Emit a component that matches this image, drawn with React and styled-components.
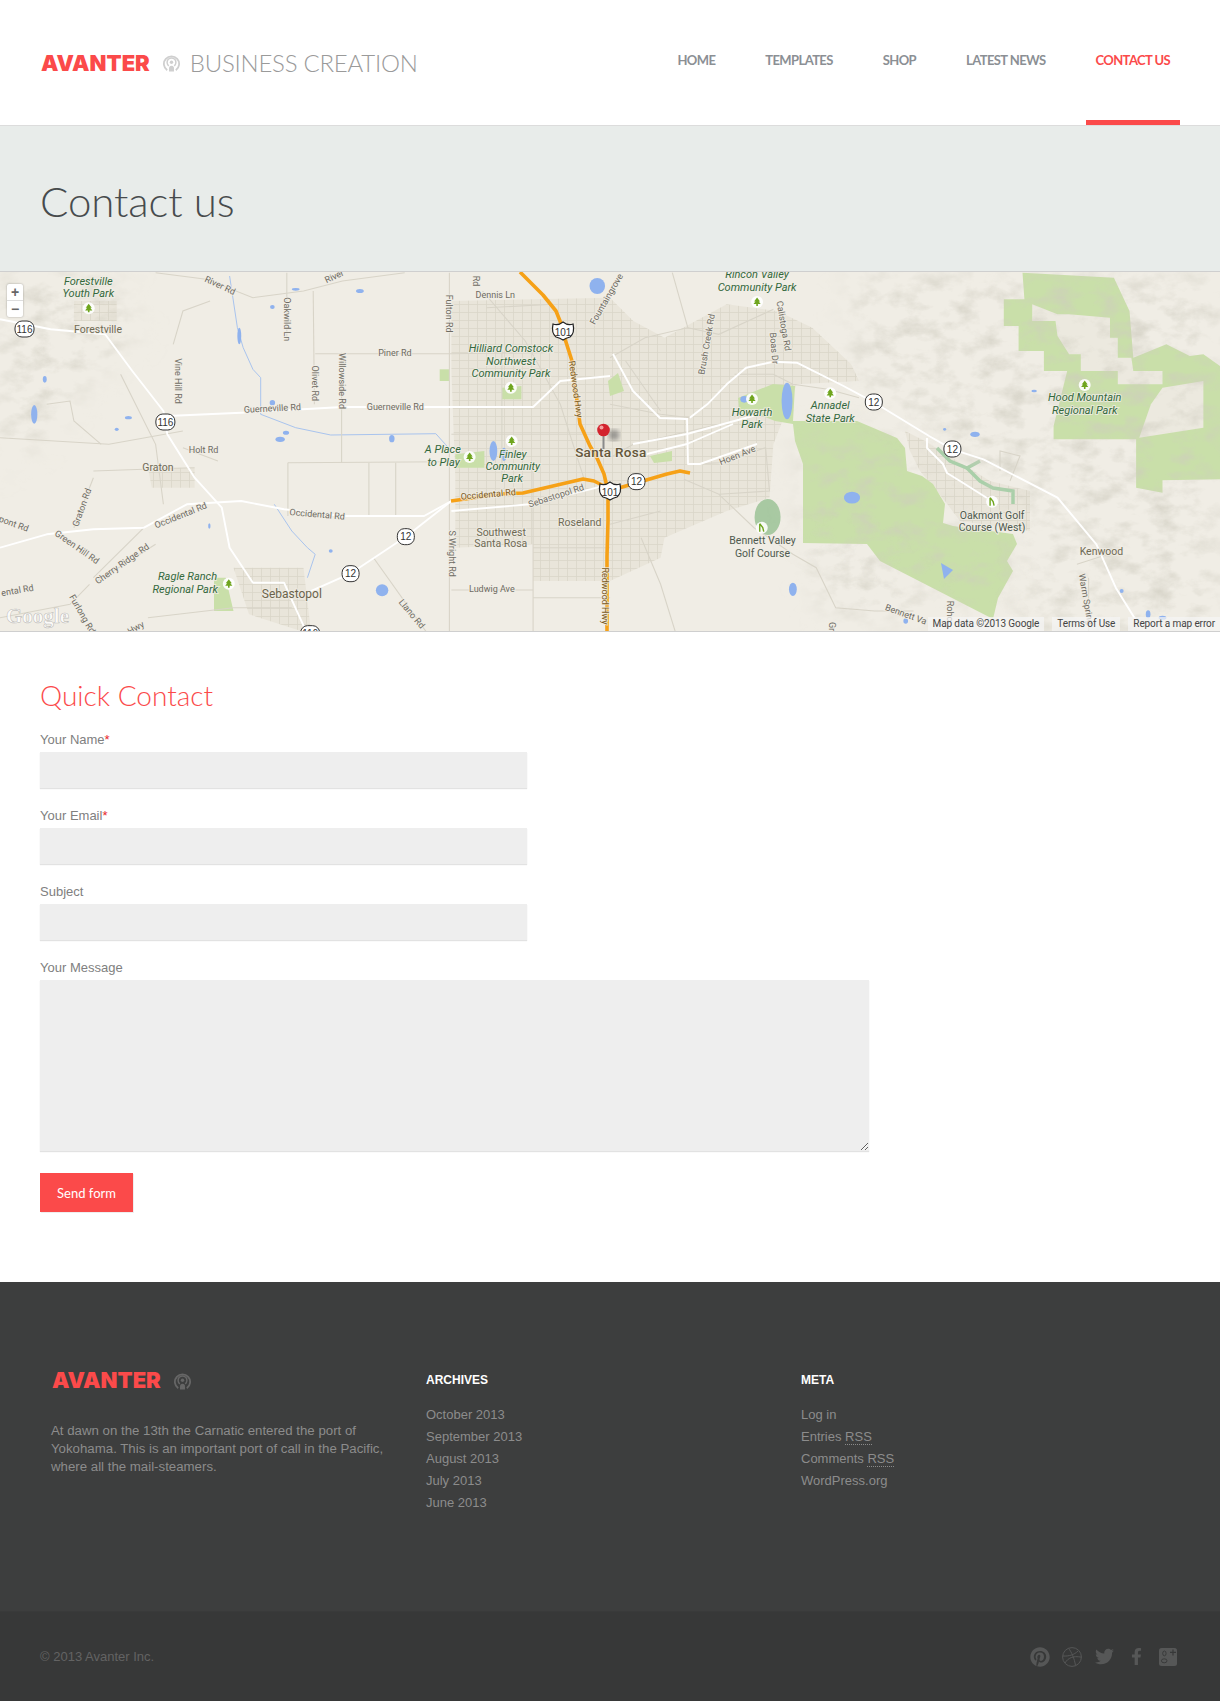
import React from "react";
import styled, { createGlobalStyle } from "styled-components";
import { FaPinterest, FaTwitter, FaFacebookF } from "react-icons/fa";

const GlobalStyle = createGlobalStyle`
  html, body { margin: 0; padding: 0; background: #fff; }
  body { font-family: "Liberation Sans", Arial, sans-serif; color: #7b7b7b; }
  * { box-sizing: border-box; }
`;

const RED = "#fb4a4a";

const Header = styled.header`
  display: flex;
  justify-content: space-between;
  height: 126px;
  padding: 0 40px 0 41px;
  border-bottom: 1px solid #dcdcdc;
`;

const Brand = styled.div`
  display: flex;
  align-items: center;
  gap: 13px;
`;

const LogoText = styled.span`
  font-family: Inter, Lato, sans-serif;
  font-weight: 900;
  font-size: 22px;
  line-height: 24px;
  letter-spacing: 0;
  color: ${RED};
`;

const Tagline = styled.span`
  margin-left: -3px;
  font-family: Lato, sans-serif;
  font-weight: 300;
  font-size: 24px;
  letter-spacing: -0.25px;
  color: #9a9a9a;
`;

const Nav = styled.nav`
  display: flex;
  gap: 30px;
`;

const NavItem = styled.a`
  padding: 52px 10px 0;
  height: 125px;
  font-family: Lato, sans-serif;
  font-weight: 700;
  font-size: 13px;
  line-height: 16px;
  letter-spacing: -0.6px;
  color: ${(p) => (p.$active ? RED : "#8b8f94")};
  border-bottom: 5px solid ${(p) => (p.$active ? RED : "transparent")};
`;

const TitleBand = styled.div`
  display: flex;
  align-items: center;
  height: 145px;
  padding: 4px 40px 0;
  background: #e8ecea;
`;

const PageTitle = styled.h1`
  margin: 0;
  font-family: Lato, sans-serif;
  font-weight: 300;
  font-size: 42px;
  letter-spacing: -0.1px;
  color: #474b4d;
`;

const MapFrame = styled.div`
  position: relative;
  height: 361px;
  overflow: hidden;
  border-top: 1px solid #cfcfcf;
  border-bottom: 1px solid #cfcfcf;
  background: #f0ede5;
`;

const MapCanvas = styled.svg`
  display: block;
`;

const LABEL_STYLES = {
  park: "font-size: 11px; font-style: italic; fill: #33683c;",
  road: "font-size: 9px; fill: #6e6b62;",
  hwy: "font-size: 9px; fill: #7c5a1c;",
  town: "font-size: 10.5px; fill: #6f6a55;",
  place: "font-size: 10.5px; fill: #4f5a4f;",
  city: "font-size: 13.5px; font-weight: 500; letter-spacing: 0.3px; fill: #64563a;",
  mid: "font-size: 12px; fill: #6b634c;",
};

const MapLabel = styled.text`
  font-family: Roboto, "Liberation Sans", sans-serif;
  text-anchor: middle;
  dominant-baseline: middle;
  paint-order: stroke;
  stroke: rgba(240, 237, 229, 0.8);
  stroke-width: 2px;
  ${(p) => LABEL_STYLES[p.$kind]}
`;

const ShieldText = styled.text`
  font-family: "Liberation Sans", sans-serif;
  font-size: 10px;
  text-anchor: middle;
  dominant-baseline: central;
  fill: #333;
`;

const GoogleMark = styled.text`
  font-family: "Liberation Serif", serif;
  font-weight: 700;
  font-size: 21px;
  fill: rgba(255, 255, 255, 0.75);
  stroke: rgba(120, 120, 120, 0.45);
  stroke-width: 0.6px;
`;

const ZoomControl = styled.div`
  position: absolute;
  top: 12px;
  left: 7px;
  display: flex;
  flex-direction: column;
  width: 16px;
  height: 33px;
  background: #fff;
  border-radius: 2px;
  box-shadow: 0 0 2px rgba(0, 0, 0, 0.35);
`;

const ZoomButton = styled.span`
  flex: 1;
  font: 700 14px/16px "Liberation Sans", sans-serif;
  text-align: center;
  color: #666;
  & + & { border-top: 1px solid #ddd; }
`;

const Attribution = styled.div`
  position: absolute;
  right: 0;
  bottom: 0;
  display: flex;
  gap: 8px;
`;

const AttributionItem = styled.span`
  padding: 0 5px;
  background: rgba(245, 245, 245, 0.7);
  font: 10px/14px Roboto, sans-serif;
  letter-spacing: -0.1px;
  color: #444;
`;

const Content = styled.main`
  padding: 45px 40px 70px;
`;

const SectionTitle = styled.h2`
  margin: 0 0 17px;
  font-family: Lato, sans-serif;
  font-weight: 300;
  font-size: 28px;
  line-height: 36px;
  color: ${RED};
`;

const Form = styled.form`
  display: flex;
  flex-direction: column;
  align-items: flex-start;
  gap: 18px;
`;

const Field = styled.div`
  display: flex;
  flex-direction: column;
`;

const Label = styled.label`
  height: 18px;
  margin-bottom: 4px;
  padding-top: 1px;
  font-size: 13px;
  line-height: 18px;
  color: #808080;
`;

const Required = styled.span`
  color: #e8262c;
`;

const Input = styled.input`
  display: block;
  width: 487px;
  height: 36px;
  border: 0;
  background: #eee;
  box-shadow: 0 1px 1px #e2e2e2;
  outline: none;
`;

const TextArea = styled.textarea`
  display: block;
  width: 829px;
  height: 171px;
  border: 0;
  background: #eee;
  box-shadow: 0 1px 1px #e2e2e2;
  outline: none;
`;

const SendButton = styled.button`
  width: 93px;
  height: 39px;
  margin-top: 4px;
  border: 0;
  background: ${RED};
  box-shadow: 1px 1px 0 #eee;
  font-family: Lato, sans-serif;
  font-size: 13px;
  color: #fff;
`;

const FooterMain = styled.footer`
  display: grid;
  grid-template-columns: repeat(3, 345px);
  gap: 30px;
  height: 329px;
  padding: 86px 0 0 51px;
  background: #3d3e3e;
`;

const FooterBrand = styled.div`
  display: flex;
  align-items: center;
  gap: 13px;
  height: 24px;
  margin: 0 0 30px 1px;
`;

const FooterText = styled.p`
  margin: 0;
  font-size: 13.25px;
  line-height: 18px;
  color: #8c8c8c;
`;

const FooterTitle = styled.h3`
  margin: 0 0 12px;
  font-size: 12px;
  line-height: 24px;
  font-weight: 700;
  color: #fff;
`;

const FooterList = styled.ul`
  margin: 0;
  padding: 0;
  list-style: none;
`;

const FooterLink = styled.li`
  font-size: 13px;
  line-height: 22px;
  color: #8c8c8c;
`;

const Abbr = styled.abbr`
  border-bottom: 1px dotted #8a8a8a;
`;

const FooterBottom = styled.div`
  display: flex;
  justify-content: space-between;
  align-items: center;
  height: 90px;
  padding: 0 36px 0 40px;
  background: #373838;
  border-top: 1px solid #393a3a;
`;

const Copyright = styled.span`
  font-size: 13px;
  color: #636363;
`;

const SocialRow = styled.div`
  display: flex;
`;

const SocialSlot = styled.a`
  display: flex;
  justify-content: center;
  align-items: center;
  width: 32px;
  height: 22px;
  color: #565757;
  font-size: ${(p) => p.$size}px;
`;

const BroadcastIcon = ({ color }) => (
  <svg width="17" height="19" viewBox="0 0 17 19" fill="none" stroke={color}>
    <path d="M4.2 17.2a7.6 7.6 0 1 1 8.6 0" strokeWidth="1.8" />
    <path d="M5.8 12.8a4.4 4.4 0 1 1 5.4 0" strokeWidth="1.5" />
    <circle cx="8.5" cy="9.2" r="1.7" fill={color} stroke="none" />
    <path d="M6 18.5v-3.2a2.5 2.5 0 0 1 5 0v3.2z" fill={color} stroke="none" />
  </svg>
);

const DribbbleIcon = () => (
  <svg width="20" height="20" viewBox="0 0 20 20" fill="none" stroke="currentColor" strokeWidth="1">
    <circle cx="10" cy="10" r="9.4" />
    <path d="M6.5 1.3c3 3.6 6 10.5 7 17.2M1 9c6 .3 11-1 15-5M3 16c3-5 8-7.5 16.4-5.8" />
  </svg>
);

const GooglePlusIcon = () => (
  <svg width="18" height="18" viewBox="0 0 18 18">
    <rect width="18" height="18" rx="2.5" fill="currentColor" />
    <g fill="none" stroke="#373838">
      <ellipse cx="5.4" cy="5.4" rx="1.7" ry="2.4" strokeWidth="0.9" />
      <ellipse cx="5.2" cy="12.8" rx="2.8" ry="2" strokeWidth="0.9" />
      <path d="M14 1.4v6M11 4.4h6" strokeWidth="1.2" />
    </g>
  </svg>
);

// map data is read off the reference: L and R are its two halves, F is full-page pixels
const L = ([x, y]) => [x / 2.57, y / 3 - 1];
const R = ([x, y]) => [610 + x / 2.57, y / 3 - 1];
const F = ([x, y]) => [x, y - 271];
const toPoints = (frame, pts) => pts.map((p) => frame(p).map((n) => n.toFixed(1)).join(",")).join(" ");

const HILLS = [
  [R, [[620, 5], [1568, 5], [1568, 1090], [1050, 1090], [1100, 760], [820, 480], [620, 330]]],
  [L, [[0, 5], [300, 5], [360, 200], [300, 240], [100, 500], [0, 600]]],
  [R, [[495, 830], [660, 830], [860, 1040], [560, 1040]]],
  [F, [[803, 430], [900, 440], [950, 530], [1015, 540], [995, 615], [870, 550], [803, 540]]],
];

const URBAN = [
  [L, [[1160, 90], [1568, 80], [1568, 930], [1370, 930], [1370, 820], [1170, 830], [1170, 620], [1160, 300]]],
  [R, [[0, 80], [60, 150], [140, 200], [300, 100], [430, 120], [520, 170], [620, 280], [640, 330], [480, 340], [420, 520], [410, 680], [300, 720], [140, 800], [130, 860], [0, 930]]],
  [L, [[600, 890], [780, 890], [800, 1090], [640, 1030]]],
  [L, [[380, 590], [500, 590], [500, 650], [390, 650]]],
  [L, [[190, 90], [300, 90], [300, 150], [190, 150]]],
  [F, [[905, 430], [925, 440], [990, 480], [1030, 490], [1030, 530], [960, 520], [945, 500], [920, 470], [910, 450]]],
];

const PARKS = [
  [F, [[738, 397], [773, 383], [795, 385], [793, 420], [820, 420], [857, 420], [897, 437], [905, 447], [907, 470], [922, 475], [933, 483], [945, 503], [943, 522], [953, 525], [1013, 533], [1017, 543], [1007, 560], [1013, 570], [998, 597], [993, 618], [880, 560], [867, 543], [803, 542], [803, 463], [795, 440], [793, 423], [775, 420], [755, 412], [740, 415]]],
  [R, [[1060, 5], [1295, 20], [1335, 120], [1345, 260], [1430, 220], [1490, 255], [1525, 250], [1568, 285], [1568, 625], [1420, 628], [1420, 665], [1352, 650], [1352, 505], [1140, 505], [1140, 465], [1175, 300], [1115, 300], [1115, 240], [1050, 240], [1050, 165], [1012, 165], [1012, 85], [1065, 85]]],
  [L, [[550, 920], [580, 920], [600, 1020], [550, 1020]]],
  [L, [[1130, 295], [1155, 295], [1155, 330], [1130, 330]]],
  [L, [[1170, 550], [1245, 540], [1245, 590], [1170, 590]]],
  [L, [[1290, 350], [1340, 345], [1340, 385], [1290, 385]]],
  [F, [[608, 380], [618, 372], [624, 390], [610, 395]]],
  [F, [[650, 455], [672, 450], [672, 460], [654, 462]]],
];

const PARK_HOLES = [
  [R, [[1085, 100], [1150, 130], [1180, 130], [1285, 140], [1285, 200], [1305, 200], [1305, 260], [1340, 260], [1345, 300], [1420, 300], [1420, 340], [1305, 340], [1305, 300], [1210, 300], [1210, 250], [1180, 250], [1150, 195], [1145, 150], [1085, 150]]],
  [R, [[1420, 350], [1525, 330], [1525, 470], [1360, 500], [1390, 400]]],
];

const COURSE_FAIRWAYS = [
  [F, [[937, 447], [950, 460], [967, 467], [980, 460]]],
  [F, [[967, 467], [980, 480], [993, 487], [1013, 490], [1013, 503]]],
];

const MINOR_ROADS = [
  [L, [[810, 248], [1160, 248], [1400, 245]]],
  [L, [[1155, 5], [1155, 1090]]],
  [L, [[878, 245], [878, 575]]],
  [L, [[805, 60], [808, 400]]],
  [L, [[737, 5], [737, 210]]],
  [L, [[445, 220], [470, 120], [540, 90]]],
  [L, [[400, 5], [530, 25], [650, 80], [780, 60], [880, 30], [1040, 5]]],
  [L, [[740, 575], [1150, 572]]],
  [L, [[740, 575], [740, 735]]],
  [L, [[1017, 575], [1017, 735]]],
  [L, [[948, 575], [948, 735]]],
  [L, [[240, 600], [370, 595], [500, 590]]],
  [L, [[190, 770], [240, 620]]],
  [L, [[470, 530], [560, 570]]],
  [L, [[240, 920], [370, 770]]],
  [L, [[400, 820], [250, 930]]],
  [L, [[380, 1040], [600, 1010], [750, 1010]]],
  [L, [[0, 500], [280, 520], [470, 480]]],
  [L, [[310, 310], [400, 520], [420, 700]]],
  [L, [[120, 400], [180, 390], [190, 450], [260, 520]]],
  [L, [[0, 1040], [180, 1000], [230, 940]]],
  [L, [[960, 860], [1100, 1090]]],
  [L, [[1160, 957], [1370, 957]]],
  [L, [[1370, 830], [1568, 830]]],
  [L, [[1370, 980], [1568, 980]]],
  [L, [[1370, 600], [1370, 1090]]],
  [L, [[1160, 490], [1568, 490]]],
  [L, [[1250, 110], [1420, 100]]],
  [L, [[1290, 240], [1290, 620]]],
  [L, [[1240, 60], [1350, 210], [1440, 400], [1500, 620]]],
  [R, [[160, 5], [200, 170], [90, 200], [0, 260]]],
  [R, [[200, 170], [280, 190], [420, 115]]],
  [R, [[320, 310], [420, 310], [470, 340], [560, 355], [640, 380]]],
  [R, [[205, 580], [280, 575], [400, 530], [410, 660], [280, 670], [190, 625]]],
  [R, [[280, 670], [370, 770], [470, 850], [530, 890], [580, 1010], [680, 1020], [780, 1020]]],
  [R, [[80, 800], [130, 940], [170, 1090]]],
  [R, [[1200, 880], [1280, 850]]],
  [R, [[205, 440], [130, 430], [0, 400]]],
  [R, [[280, 460], [60, 520], [0, 560]]],
  [R, [[40, 270], [130, 420]]],
  [R, [[130, 720], [0, 760]]],
  [R, [[1230, 920], [1230, 1090]]],
  [F, [[1000, 470], [1000, 450], [1020, 455], [1010, 480]]],
];

const MAIN_ROADS = [
  [L, [[0, 145], [130, 175], [270, 190], [340, 300], [420, 420], [430, 490], [500, 620], [570, 710], [590, 830], [650, 935], [730, 935], [790, 1090]]],
  [L, [[430, 435], [620, 425], [880, 408], [1160, 408], [1370, 408], [1440, 330], [1568, 315]]],
  [L, [[0, 830], [120, 790], [240, 775], [370, 770], [480, 700], [620, 690], [730, 715], [880, 735], [1090, 735], [1160, 690]]],
  [L, [[780, 970], [900, 908], [1043, 797], [1160, 690]]],
  [L, [[1160, 720], [1360, 700], [1568, 640]]],
  [R, [[205, 440], [250, 400], [300, 340], [350, 290], [420, 272], [480, 275], [600, 345], [680, 395], [820, 495], [880, 535], [960, 565], [1150, 680], [1250, 820], [1300, 950], [1350, 1045]]],
  [F, [[613, 353], [633, 390], [660, 417], [687, 418]]],
  [F, [[687, 417], [688, 463], [700, 463], [757, 443]]],
  [F, [[633, 443], [687, 433], [760, 413]]],
  [F, [[647, 453], [687, 443], [733, 423]]],
  [F, [[927, 437], [927, 447], [943, 463], [947, 472], [960, 480], [987, 497]]],
];

const FREEWAYS = [
  [F, [[520, 271], [543, 294], [556, 310], [562, 325], [565, 338], [572, 360], [577, 400], [580, 423], [590, 445], [597, 457], [604, 473], [608, 490], [608, 520], [607, 555], [607, 632]]],
  [F, [[451, 500], [500, 493], [523, 492], [583, 478], [594, 480], [604, 485]]],
  [F, [[612, 489], [667, 473], [680, 470], [690, 472]]],
];

const WATER = [
  [L, 88, 430, 8, 28], [L, 115, 325, 5, 10], [L, 615, 195, 5, 25], [L, 700, 108, 6, 6], [L, 925, 60, 10, 6],
  [L, 760, 55, 10, 4], [L, 720, 505, 12, 8], [L, 735, 485, 8, 6], [L, 1007, 503, 7, 11], [L, 1268, 540, 10, 30],
  [L, 1295, 550, 8, 20], [L, 982, 958, 16, 18], [L, 538, 765, 3, 8], [L, 1535, 45, 20, 24], [L, 850, 840, 5, 5],
  [L, 700, 395, 7, 8], [L, 330, 440, 9, 5], [L, 300, 475, 5, 5], [R, 455, 390, 14, 55], [R, 622, 678, 20, 16],
  [R, 938, 490, 12, 8], [R, 345, 385, 10, 10], [R, 470, 955, 10, 20], [R, 1383, 1030, 6, 12],
  [R, 1420, 1040, 10, 6], [R, 1090, 360, 7, 4], [R, 860, 475, 4, 4], [R, 1315, 960, 5, 6], [R, 760, 1050, 6, 8],
];

const RIVERS = [
  [L, [[590, 15], [610, 170], [625, 230], [650, 295], [670, 320], [670, 430], [760, 470], [850, 492], [1120, 488], [1160, 540]]],
  [L, [[705, 700], [750, 780], [790, 830], [810, 850], [790, 920]]],
];

const LABELS = [
  [L, "park", "Forestville", 227, 33], [L, "park", "Youth Park", 227, 69],
  [L, "park", "Hilliard Comstock", 1313, 234], [L, "park", "Northwest", 1313, 272], [L, "park", "Community Park", 1313, 309],
  [L, "park", "Finley", 1318, 552], [L, "park", "Community", 1318, 589], [L, "park", "Park", 1316, 625],
  [L, "park", "A Place", 1138, 537], [L, "park", "to Play", 1140, 576],
  [L, "park", "Ragle Ranch", 482, 918], [L, "park", "Regional Park", 476, 957],
  [R, "park", "Rincon Valley", 378, 13], [R, "park", "Community Park", 378, 51],
  [R, "park", "Howarth", 365, 426], [R, "park", "Park", 365, 462],
  [R, "park", "Annadel", 566, 405], [R, "park", "State Park", 566, 444],
  [R, "park", "Hood Mountain", 1220, 381], [R, "park", "Regional Park", 1220, 420],
  [R, "place", "Bennett Valley", 392, 810], [R, "place", "Golf Course", 392, 849],
  [R, "place", "Oakmont Golf", 982, 735], [R, "place", "Course (West)", 982, 771],
  [L, "town", "Forestville", 252, 177], [L, "town", "Graton", 406, 591], [L, "town", "Roseland", 1490, 756],
  [L, "town", "Southwest", 1288, 787], [L, "town", "Santa Rosa", 1287, 819], [R, "town", "Kenwood", 1263, 843],
  [L, "mid", "Sebastopol", 750, 972], [L, "city", "Santa Rosa", 1570, 546],
  [L, "road", "Dennis Ln", 1273, 73], [L, "road", "Piner Rd", 1015, 248],
  [L, "road", "Guerneville Rd", 700, 414, -3], [L, "road", "Guerneville Rd", 1016, 410],
  [L, "road", "Holt Rd", 523, 538], [L, "road", "Occidental Rd", 465, 735, -22], [L, "road", "Occidental Rd", 815, 732, 5],
  [L, "road", "Sebastopol Rd", 1430, 676, -18], [L, "hwy", "Occidental Rd", 1255, 672, -5], [L, "road", "Ludwig Ave", 1264, 957],
  [L, "road", "Oakwild Ln", 735, 145, 90], [L, "road", "Olivet Rd", 807, 337, 90], [L, "road", "Willowside Rd", 877, 330, 90],
  [L, "road", "Vine Hill Rd", 457, 330, 90], [L, "road", "Fulton Rd", 1153, 128, 90], [L, "road", "Rd", 1222, 30, 90],
  [L, "road", "S Wright Rd", 1160, 848, 90], [L, "hwy", "Redwood Hwy", 1478, 355, 82], [L, "hwy", "Redwood Hwy", 1553, 975, 90],
  [L, "road", "Graton Rd", 212, 710, -70], [L, "road", "Green Hill Rd", 197, 830, 35], [L, "road", "Cherry Ridge Rd", 315, 880, -35],
  [L, "road", "River Rd", 565, 45, 25], [L, "road", "River", 860, 18, -25], [L, "road", "Furlong Rd", 210, 1030, 60],
  [L, "road", "Llano Rd", 1057, 1030, 50], [L, "road", "ental Rd", 45, 960, -10], [L, "road", "pont Rd", 35, 760, 20],
  [L, "road", "Hwy", 350, 1072, -30], [L, "road", "Fountaingrove", 1560, 85, -60],
  [R, "road", "Brush Creek Rd", 250, 220, -80], [R, "road", "Calistoga Rd", 445, 165, 80], [R, "road", "Boas Dr", 420, 232, 85],
  [R, "road", "Hoen Ave", 328, 555, -22], [R, "road", "Bennett Va", 760, 1032, 20], [R, "road", "Warm Spring", 1222, 985, 80],
  [R, "road", "Rohc", 873, 1020, 90], [R, "road", "Gri", 568, 1070, 90],
];

const ROUND_SHIELDS = [
  [L, "116", 63, 174, 8.5], [L, "116", 425, 453, 8.5], [L, "116", 797, 1088, 8.5],
  [L, "12", 1043, 797, 7.5], [L, "12", 901, 908, 7.5],
  [R, "12", 68, 632, 7.5], [R, "12", 678, 393, 7.5], [R, "12", 880, 534, 7.5],
];

const US_SHIELDS = [[L, 1447, 180], [R, 0, 660]];

const TREES = [
  [L, 228, 112], [L, 1313, 350], [L, 1315, 510], [L, 1207, 558], [L, 588, 938],
  [R, 378, 93], [R, 365, 384], [R, 566, 367], [R, 1220, 342],
];

const GOLF = [[R, 390, 770], [R, 982, 692]];

const MapDrawing = () => (
  <MapCanvas width="1220" height="359" viewBox="0 0 1220 359">
    <defs>
      <filter id="hills" filterUnits="userSpaceOnUse" x="0" y="0" width="1220" height="359">
        <feGaussianBlur in="SourceAlpha" stdDeviation="16" result="soft" />
        <feTurbulence type="fractalNoise" baseFrequency="0.04 0.06" numOctaves="5" seed="11" />
        <feColorMatrix values="0 0 0 0 0.62  0 0 0 0 0.6  0 0 0 0 0.52  1.5 0 0 0 -0.66" />
        <feComposite in2="soft" operator="in" />
      </filter>
      <filter id="pinShadow">
        <feGaussianBlur stdDeviation="2.4" />
      </filter>
      <pattern id="streets" width="9" height="8" patternUnits="userSpaceOnUse">
        <rect width="9" height="8" fill="#e9e5da" />
        <path d="M0 .5H9M.5 0V8" stroke="#d9d5c9" strokeWidth="0.8" />
      </pattern>
    </defs>
    <rect width="1220" height="359" fill="#f0ede5" />
    {URBAN.map(([f, pts], i) => (
      <polygon key={i} points={toPoints(f, pts)} fill="url(#streets)" />
    ))}
    {PARKS.map(([f, pts], i) => (
      <polygon key={i} points={toPoints(f, pts)} fill="#c9dfa9" />
    ))}
    {PARK_HOLES.map(([f, pts], i) => (
      <polygon key={i} points={toPoints(f, pts)} fill="#ece9df" />
    ))}
    <ellipse cx={610 + 405 / 2.57} cy={245} rx="13" ry="18" fill="#a8c9a2" />
    {COURSE_FAIRWAYS.map(([f, pts], i) => (
      <polyline key={i} points={toPoints(f, pts)} fill="none" stroke="#a9cfa9" strokeWidth="3.5" />
    ))}
    {HILLS.map(([f, pts], i) => (
      <polygon key={i} points={toPoints(f, pts)} filter="url(#hills)" />
    ))}
    {RIVERS.map(([f, pts], i) => (
      <polyline key={i} points={toPoints(f, pts)} fill="none" stroke="#a9c4ee" strokeWidth="1" />
    ))}
    {WATER.map(([f, x, y, rx, ry], i) => {
      const [cx, cy] = f([x, y]);
      return <ellipse key={i} cx={cx} cy={cy} rx={rx / 2.57} ry={ry / 3} fill="#8fb2ee" />;
    })}
    <ellipse cx="852" cy="226" rx="8" ry="5.5" fill="#8fb2ee" />
    <polygon points="941,291 953,298 944,307" fill="#8fb2ee" />
    {MINOR_ROADS.map(([f, pts], i) => (
      <polyline key={i} points={toPoints(f, pts)} fill="none" stroke="#d8d4c8" strokeWidth="1.1" />
    ))}
    {MAIN_ROADS.map(([f, pts], i) => (
      <polyline key={i} points={toPoints(f, pts)} fill="none" stroke="#fff" strokeWidth="1.9" strokeLinejoin="round" />
    ))}
    {FREEWAYS.map(([f, pts], i) => (
      <polyline key={i} points={toPoints(f, pts)} fill="none" stroke="#f6a117" strokeWidth="3.6" strokeLinejoin="round" />
    ))}
    {LABELS.map(([f, kind, text, x, y, rot], i) => {
      const [px, py] = f([x, y]);
      return (
        <MapLabel key={i} $kind={kind} x={px} y={py} transform={rot ? `rotate(${rot} ${px} ${py})` : undefined}>
          {text}
        </MapLabel>
      );
    })}
    {ROUND_SHIELDS.map(([f, text, x, y, r], i) => {
      const [px, py] = f([x, y]);
      return (
        <g key={i}>
          <rect x={px - r - 1} y={py - 8} width={2 * r + 2} height="16" rx="7" fill="#fff" stroke="#333" strokeWidth="1" />
          <ShieldText x={px} y={py}>{text}</ShieldText>
        </g>
      );
    })}
    {US_SHIELDS.map(([f, x, y], i) => {
      const [px, py] = f([x, y]);
      return (
        <g key={i}>
          <path
            d={`M${px - 10} ${py - 7}q5 2 10 -2q5 4 10 2q2 9 -3 13q-4 1 -7 3q-3 -2 -7 -3q-5 -4 -3 -13z`}
            fill="#fff"
            stroke="#222"
            strokeWidth="1.2"
          />
          <ShieldText x={px} y={py + 1}>101</ShieldText>
        </g>
      );
    })}
    {TREES.map(([f, x, y], i) => {
      const [px, py] = f([x, y]);
      return (
        <g key={i}>
          <circle cx={px} cy={py} r="6" fill="#fff" opacity="0.9" />
          <path d={`M${px} ${py - 4.5}l3 4h-1.4l2 2.6h-7.2l2-2.6h-1.4zM${px - 0.8} ${py + 2}h1.6v2h-1.6z`} fill="#6fa51d" />
        </g>
      );
    })}
    {GOLF.map(([f, x, y], i) => {
      const [px, py] = f([x, y]);
      return (
        <g key={i}>
          <circle cx={px} cy={py} r="6" fill="#fff" opacity="0.9" />
          <path d={`M${px - 2} ${py - 4}v8M${px - 2} ${py - 4}l3 4l1 4`} stroke="#6fa51d" strokeWidth="1.4" fill="none" />
        </g>
      );
    })}
    <circle cx="614" cy="163" r="5.5" fill="#555" opacity="0.55" filter="url(#pinShadow)" />
    <rect x="602.5" y="162" width="2" height="15" fill="#8a8a8a" />
    <circle cx="603.5" cy="158" r="6.3" fill="#d3232e" />
    <circle cx="601.5" cy="155.5" r="2" fill="#f3a0a0" />
    <GoogleMark x="6" y="351">Google</GoogleMark>
  </MapCanvas>
);

const NAV_ITEMS = ["HOME", "TEMPLATES", "SHOP", "LATEST NEWS", "CONTACT US"];
const ARCHIVES = ["October 2013", "September 2013", "August 2013", "July 2013", "June 2013"];

export default function App() {
  return (
    <>
      <GlobalStyle />
      <Header>
        <Brand>
          <LogoText>AVANTER</LogoText>
          <BroadcastIcon color="#cfcfcf" />
          <Tagline>BUSINESS CREATION</Tagline>
        </Brand>
        <Nav>
          {NAV_ITEMS.map((item) => (
            <NavItem key={item} $active={item === "CONTACT US"}>{item}</NavItem>
          ))}
        </Nav>
      </Header>
      <TitleBand>
        <PageTitle>Contact us</PageTitle>
      </TitleBand>
      <MapFrame>
        <MapDrawing />
        <ZoomControl>
          <ZoomButton>+</ZoomButton>
          <ZoomButton>−</ZoomButton>
        </ZoomControl>
        <Attribution>
          <AttributionItem>Map data ©2013 Google</AttributionItem>
          <AttributionItem>Terms of Use</AttributionItem>
          <AttributionItem>Report a map error</AttributionItem>
        </Attribution>
      </MapFrame>
      <Content>
        <SectionTitle>Quick Contact</SectionTitle>
        <Form>
          <Field>
            <Label>Your Name<Required>*</Required></Label>
            <Input />
          </Field>
          <Field>
            <Label>Your Email<Required>*</Required></Label>
            <Input />
          </Field>
          <Field>
            <Label>Subject</Label>
            <Input />
          </Field>
          <Field>
            <Label>Your Message</Label>
            <TextArea />
          </Field>
          <SendButton type="button">Send form</SendButton>
        </Form>
      </Content>
      <FooterMain>
        <div>
          <FooterBrand>
            <LogoText>AVANTER</LogoText>
            <BroadcastIcon color="#666" />
          </FooterBrand>
          <FooterText>
            At dawn on the 13th the Carnatic entered the port of Yokohama. This is an important port of call in the Pacific, where all the mail-steamers.
          </FooterText>
        </div>
        <div>
          <FooterTitle>ARCHIVES</FooterTitle>
          <FooterList>
            {ARCHIVES.map((item) => (
              <FooterLink key={item}>{item}</FooterLink>
            ))}
          </FooterList>
        </div>
        <div>
          <FooterTitle>META</FooterTitle>
          <FooterList>
            <FooterLink>Log in</FooterLink>
            <FooterLink>Entries <Abbr>RSS</Abbr></FooterLink>
            <FooterLink>Comments <Abbr>RSS</Abbr></FooterLink>
            <FooterLink>WordPress.org</FooterLink>
          </FooterList>
        </div>
      </FooterMain>
      <FooterBottom>
        <Copyright>© 2013 Avanter Inc.</Copyright>
        <SocialRow>
          <SocialSlot $size={20}><FaPinterest /></SocialSlot>
          <SocialSlot $size={20}><DribbbleIcon /></SocialSlot>
          <SocialSlot $size={19}><FaTwitter /></SocialSlot>
          <SocialSlot $size={17}><FaFacebookF /></SocialSlot>
          <SocialSlot $size={18}><GooglePlusIcon /></SocialSlot>
        </SocialRow>
      </FooterBottom>
    </>
  );
}
